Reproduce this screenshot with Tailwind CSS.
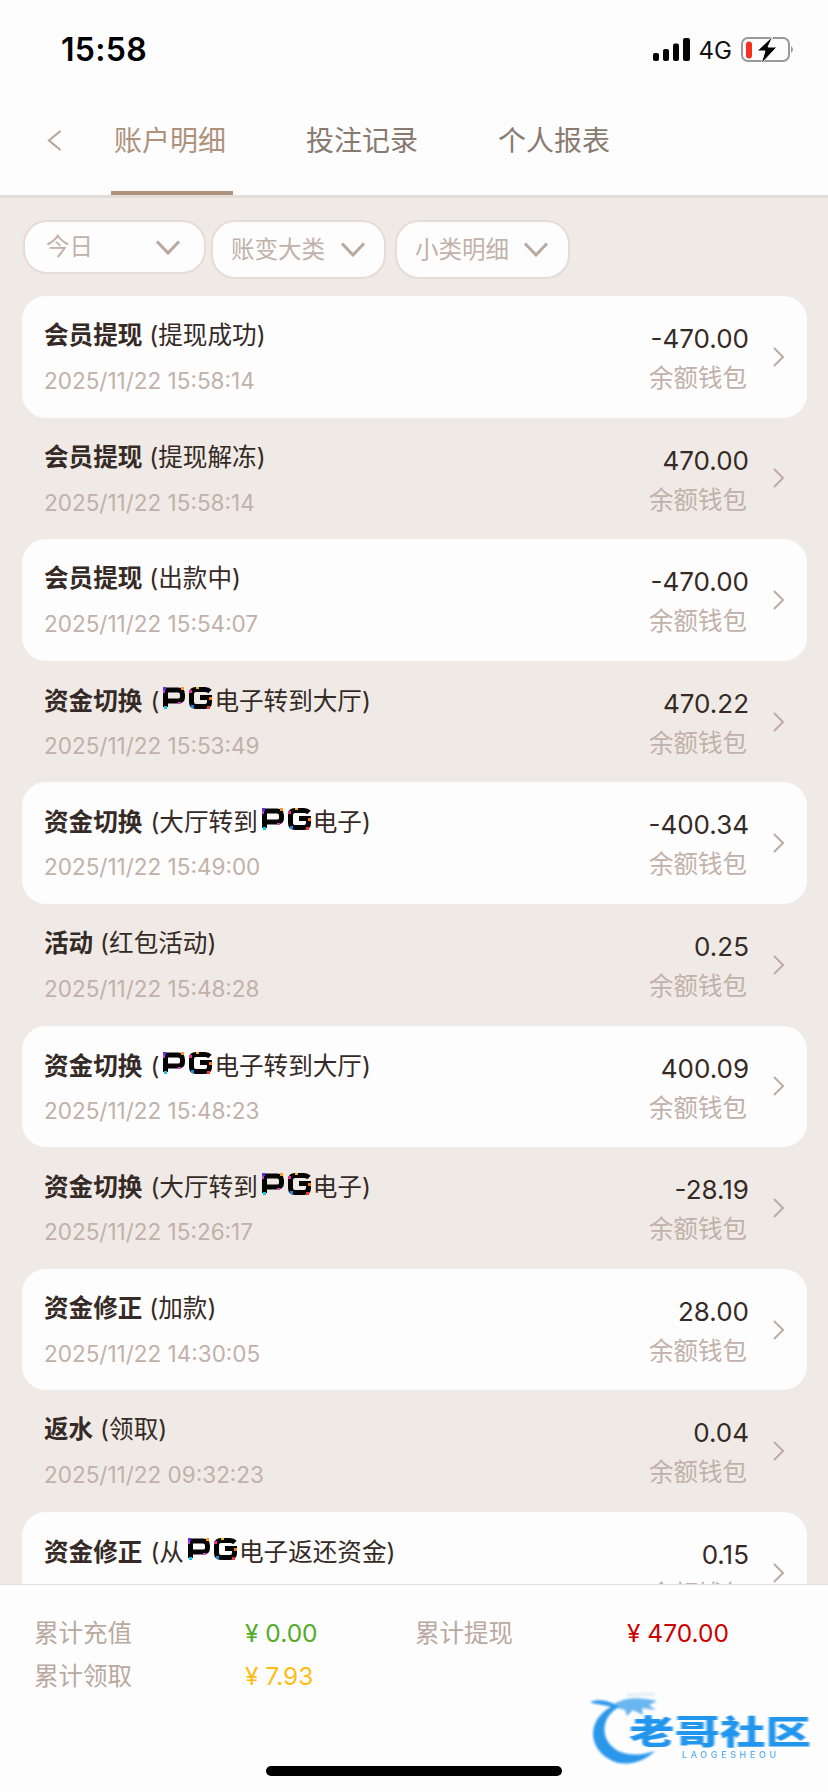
<!DOCTYPE html>
<html lang="zh-CN">
<head>
<meta charset="utf-8">
<script src="https://cdn.jsdelivr.net/npm/@tailwindcss/browser@4"></script>
</head>
<body class="m-0">
<svg width="0" height="0" class="absolute">
  <defs>
    <symbol id="pg" viewBox="0 0 49 22">
      <path d="M2.500 20V3H15Q19.500 3 19.500 7.500V10Q19.500 14 15 14H5" fill="none" stroke="#050505" stroke-width="5"/>
      <path d="M47 4.500Q45 2.500 42 2.500H33Q28.500 2.500 28.500 7V15Q28.500 19.500 33 19.500H42Q46.500 19.500 46.500 15V10.500H37" fill="none" stroke="#050505" stroke-width="5"/>
      <rect x="0" y="0" width="3" height="3" fill="#6a2be0"/>
      <rect x="0" y="3" width="2" height="3" fill="#c23be0"/>
      <rect x="1" y="19" width="3" height="3" fill="#19c6e8"/>
      <rect x="18" y="0" width="3" height="3" fill="#ff9a1a"/>
      <rect x="15" y="15" width="3" height="2" fill="#e83bd0"/>
      <rect x="26" y="3" width="3" height="3" fill="#ee2f8e"/>
      <rect x="33" y="0" width="3" height="2" fill="#ffb21a"/>
      <rect x="28" y="18" width="3" height="3" fill="#1e88e8"/>
      <rect x="46" y="10" width="3" height="3" fill="#ff7a1a"/>
      <rect x="44" y="19" width="3" height="3" fill="#f03a2a"/>
    </symbol>
    <symbol id="chev" viewBox="0 0 11 20">
      <path d="M1 1L10 10L1 19" fill="none" stroke="#bdaca3" stroke-width="2"/>
    </symbol>
    <symbol id="down" viewBox="0 0 25 15">
      <path d="M1.500 1.500L12.500 13L23.500 1.500" fill="none" stroke="#b8a89e" stroke-width="3"/>
    </symbol>
  </defs>
</svg>

<div class="relative w-[828px] h-[1792px] overflow-hidden flex flex-col bg-[#f0eae6] text-[#352a25]" style="font-family:Inter,'Noto Sans CJK SC',sans-serif">

  <!-- status bar -->
  <div class="h-[84px] bg-[#fdfdfe] flex items-start shrink-0 relative">
    <span class="ml-[61px] mt-[31px] text-[32px] leading-[38px] font-semibold text-black tracking-[0.3px]">15:58</span>
    <div class="ml-auto flex items-start">
      <svg class="mt-[38px]" width="38" height="23" viewBox="0 0 38 23" fill="#050505">
        <rect x="0" y="15" width="6" height="8" rx="2"/>
        <rect x="10" y="11" width="6" height="12" rx="2"/>
        <rect x="20" y="5.500" width="6" height="17.500" rx="2"/>
        <rect x="30" y="0" width="7" height="23" rx="2"/>
      </svg>
      <span class="ml-[8px] mt-[36px] text-[24px] leading-[29px] text-[#111]">4G</span>
      <svg class="ml-[9px] mt-[36px] mr-[33px]" width="54" height="28" viewBox="0 0 54 28">
        <rect x="1" y="2" width="47" height="23" rx="6" fill="none" stroke="#999" stroke-width="2"/>
        <path d="M50 10Q54 13.500 50 17Z" fill="#999"/>
        <rect x="5" y="5.500" width="6" height="17" rx="3" fill="#f5301f"/>
        <path d="M32 0L16 15H24L20 28L36 11H27Z" fill="#050505" stroke="#fdfdfe" stroke-width="1"/>
      </svg>
    </div>
  </div>

  <!-- tabs -->
  <div class="relative h-[111px] shrink-0 bg-[#fdfdfe] flex items-start pt-[37px]">
    <svg class="ml-[47px] mt-[9px]" width="15" height="21" viewBox="0 0 15 21">
      <path d="M13.500 1L2 10.500L13.500 20" fill="none" stroke="#b9a69a" stroke-width="2.200"/>
    </svg>
    <span class="ml-[52px] w-[112px] text-[28px] leading-[40px] text-[#ae927b]">账户明细</span>
    <span class="ml-[80px] w-[112px] text-[28px] leading-[40px] text-[#897a70]">投注记录</span>
    <span class="ml-[80px] w-[112px] text-[28px] leading-[40px] text-[#897a70]">个人报表</span>
    <div class="absolute left-[111px] bottom-0 w-[122px] h-[4px] bg-[#ae927b]"></div>
  </div>
  <div class="h-[3px] shrink-0 bg-[#e3dcd6]"></div>

  <!-- filters -->
  <div class="h-[98px] shrink-0 flex items-start pt-[22px] text-[23.5px] text-[#c1b1a8]">
    <div class="ml-[23px] w-[183px] h-[54px] rounded-[24px] border-2 border-[#e5dcd7] bg-[#fdfdfe] flex items-center">
      <span class="ml-[21px] leading-[30px]">今日</span>
      <svg class="ml-auto mr-[23px]" width="26" height="15"><use href="#down"/></svg>
    </div>
    <div class="ml-[5px] w-[175px] h-[59px] rounded-[24px] border-2 border-[#e5dcd7] bg-[#fdfdfe] flex items-center">
      <span class="ml-[18px] leading-[30px]">账变大类</span>
      <svg class="ml-auto mr-[18px]" width="26" height="15"><use href="#down"/></svg>
    </div>
    <div class="ml-[9px] w-[175px] h-[59px] rounded-[24px] border-2 border-[#e5dcd7] bg-[#fdfdfe] flex items-center">
      <span class="ml-[18px] leading-[30px]">小类明细</span>
      <svg class="ml-auto mr-[19px]" width="26" height="15"><use href="#down"/></svg>
    </div>
  </div>

  <!-- list -->
  <div class="flex-1 min-h-0 overflow-hidden pl-[22px] pr-[21px]">

    <div class="h-[121.6px] rounded-[24px] bg-[#fdfdfe] flex">
      <div class="flex-1 pl-[22px] pt-[23px]">
        <div class="h-8 text-[24.6px] leading-8 whitespace-nowrap"><span class="font-semibold">会员提现</span> (提现成功)</div>
        <div class="mt-[14px] h-8 text-[22.5px] leading-8 text-[#c1b1a8]">2025/11/22 15:58:14</div>
      </div>
      <div class="flex flex-col items-end pt-[27px]">
        <div class="h-8 text-[26px] leading-8">-470.00</div>
        <div class="mt-[7px] mr-[2px] h-8 text-[24.5px] leading-8 text-[#c1b1a8]">余额钱包</div>
      </div>
      <svg class="self-center ml-[24px] mr-[23px]" width="11" height="20"><use href="#chev"/></svg>
    </div>

    <div class="h-[121.6px] flex">
      <div class="flex-1 pl-[22px] pt-[23px]">
        <div class="h-8 text-[24.6px] leading-8 whitespace-nowrap"><span class="font-semibold">会员提现</span> (提现解冻)</div>
        <div class="mt-[14px] h-8 text-[22.5px] leading-8 text-[#c1b1a8]">2025/11/22 15:58:14</div>
      </div>
      <div class="flex flex-col items-end pt-[27px]">
        <div class="h-8 text-[26px] leading-8">470.00</div>
        <div class="mt-[7px] mr-[2px] h-8 text-[24.5px] leading-8 text-[#c1b1a8]">余额钱包</div>
      </div>
      <svg class="self-center ml-[24px] mr-[23px]" width="11" height="20"><use href="#chev"/></svg>
    </div>

    <div class="h-[121.6px] rounded-[24px] bg-[#fdfdfe] flex">
      <div class="flex-1 pl-[22px] pt-[23px]">
        <div class="h-8 text-[24.6px] leading-8 whitespace-nowrap"><span class="font-semibold">会员提现</span> (出款中)</div>
        <div class="mt-[14px] h-8 text-[22.5px] leading-8 text-[#c1b1a8]">2025/11/22 15:54:07</div>
      </div>
      <div class="flex flex-col items-end pt-[27px]">
        <div class="h-8 text-[26px] leading-8">-470.00</div>
        <div class="mt-[7px] mr-[2px] h-8 text-[24.5px] leading-8 text-[#c1b1a8]">余额钱包</div>
      </div>
      <svg class="self-center ml-[24px] mr-[23px]" width="11" height="20"><use href="#chev"/></svg>
    </div>

    <div class="h-[121.6px] flex">
      <div class="flex-1 pl-[22px] pt-[24px]">
        <div class="h-8 text-[24.6px] leading-8 whitespace-nowrap flex items-center"><span class="font-semibold">资金切换</span><span class="ml-[8px]">(</span><svg class="ml-[4px] mr-[2px] -mt-[6px]" width="49" height="22"><use href="#pg"/></svg><span>电子转到大厅)</span></div>
        <div class="mt-[13px] h-8 text-[22.5px] leading-8 text-[#c1b1a8]">2025/11/22 15:53:49</div>
      </div>
      <div class="flex flex-col items-end pt-[27px]">
        <div class="h-8 text-[26px] leading-8">470.22</div>
        <div class="mt-[7px] mr-[2px] h-8 text-[24.5px] leading-8 text-[#c1b1a8]">余额钱包</div>
      </div>
      <svg class="self-center ml-[24px] mr-[23px]" width="11" height="20"><use href="#chev"/></svg>
    </div>

    <div class="h-[121.6px] rounded-[24px] bg-[#fdfdfe] flex">
      <div class="flex-1 pl-[22px] pt-[24px]">
        <div class="h-8 text-[24.6px] leading-8 whitespace-nowrap flex items-center"><span class="font-semibold">资金切换</span><span class="ml-[8px]">(大厅转到</span><svg class="ml-[4px] mr-[2px] -mt-[6px]" width="49" height="22"><use href="#pg"/></svg><span>电子)</span></div>
        <div class="mt-[13px] h-8 text-[22.5px] leading-8 text-[#c1b1a8]">2025/11/22 15:49:00</div>
      </div>
      <div class="flex flex-col items-end pt-[27px]">
        <div class="h-8 text-[26px] leading-8">-400.34</div>
        <div class="mt-[7px] mr-[2px] h-8 text-[24.5px] leading-8 text-[#c1b1a8]">余额钱包</div>
      </div>
      <svg class="self-center ml-[24px] mr-[23px]" width="11" height="20"><use href="#chev"/></svg>
    </div>

    <div class="h-[121.6px] flex">
      <div class="flex-1 pl-[22px] pt-[23px]">
        <div class="h-8 text-[24.6px] leading-8 whitespace-nowrap"><span class="font-semibold">活动</span> (红包活动)</div>
        <div class="mt-[14px] h-8 text-[22.5px] leading-8 text-[#c1b1a8]">2025/11/22 15:48:28</div>
      </div>
      <div class="flex flex-col items-end pt-[27px]">
        <div class="h-8 text-[26px] leading-8">0.25</div>
        <div class="mt-[7px] mr-[2px] h-8 text-[24.5px] leading-8 text-[#c1b1a8]">余额钱包</div>
      </div>
      <svg class="self-center ml-[24px] mr-[23px]" width="11" height="20"><use href="#chev"/></svg>
    </div>

    <div class="h-[121.6px] rounded-[24px] bg-[#fdfdfe] flex">
      <div class="flex-1 pl-[22px] pt-[24px]">
        <div class="h-8 text-[24.6px] leading-8 whitespace-nowrap flex items-center"><span class="font-semibold">资金切换</span><span class="ml-[8px]">(</span><svg class="ml-[4px] mr-[2px] -mt-[6px]" width="49" height="22"><use href="#pg"/></svg><span>电子转到大厅)</span></div>
        <div class="mt-[13px] h-8 text-[22.5px] leading-8 text-[#c1b1a8]">2025/11/22 15:48:23</div>
      </div>
      <div class="flex flex-col items-end pt-[27px]">
        <div class="h-8 text-[26px] leading-8">400.09</div>
        <div class="mt-[7px] mr-[2px] h-8 text-[24.5px] leading-8 text-[#c1b1a8]">余额钱包</div>
      </div>
      <svg class="self-center ml-[24px] mr-[23px]" width="11" height="20"><use href="#chev"/></svg>
    </div>

    <div class="h-[121.6px] flex">
      <div class="flex-1 pl-[22px] pt-[24px]">
        <div class="h-8 text-[24.6px] leading-8 whitespace-nowrap flex items-center"><span class="font-semibold">资金切换</span><span class="ml-[8px]">(大厅转到</span><svg class="ml-[4px] mr-[2px] -mt-[6px]" width="49" height="22"><use href="#pg"/></svg><span>电子)</span></div>
        <div class="mt-[13px] h-8 text-[22.5px] leading-8 text-[#c1b1a8]">2025/11/22 15:26:17</div>
      </div>
      <div class="flex flex-col items-end pt-[27px]">
        <div class="h-8 text-[26px] leading-8">-28.19</div>
        <div class="mt-[7px] mr-[2px] h-8 text-[24.5px] leading-8 text-[#c1b1a8]">余额钱包</div>
      </div>
      <svg class="self-center ml-[24px] mr-[23px]" width="11" height="20"><use href="#chev"/></svg>
    </div>

    <div class="h-[121.6px] rounded-[24px] bg-[#fdfdfe] flex">
      <div class="flex-1 pl-[22px] pt-[23px]">
        <div class="h-8 text-[24.6px] leading-8 whitespace-nowrap"><span class="font-semibold">资金修正</span> (加款)</div>
        <div class="mt-[14px] h-8 text-[22.5px] leading-8 text-[#c1b1a8]">2025/11/22 14:30:05</div>
      </div>
      <div class="flex flex-col items-end pt-[27px]">
        <div class="h-8 text-[26px] leading-8">28.00</div>
        <div class="mt-[7px] mr-[2px] h-8 text-[24.5px] leading-8 text-[#c1b1a8]">余额钱包</div>
      </div>
      <svg class="self-center ml-[24px] mr-[23px]" width="11" height="20"><use href="#chev"/></svg>
    </div>

    <div class="h-[121.6px] flex">
      <div class="flex-1 pl-[22px] pt-[23px]">
        <div class="h-8 text-[24.6px] leading-8 whitespace-nowrap"><span class="font-semibold">返水</span> (领取)</div>
        <div class="mt-[14px] h-8 text-[22.5px] leading-8 text-[#c1b1a8]">2025/11/22 09:32:23</div>
      </div>
      <div class="flex flex-col items-end pt-[27px]">
        <div class="h-8 text-[26px] leading-8">0.04</div>
        <div class="mt-[7px] mr-[2px] h-8 text-[24.5px] leading-8 text-[#c1b1a8]">余额钱包</div>
      </div>
      <svg class="self-center ml-[24px] mr-[23px]" width="11" height="20"><use href="#chev"/></svg>
    </div>

    <div class="h-[121.6px] rounded-[24px] bg-[#fdfdfe] flex">
      <div class="flex-1 pl-[22px] pt-[24px]">
        <div class="h-8 text-[24.6px] leading-8 whitespace-nowrap flex items-center"><span class="font-semibold">资金修正</span><span class="ml-[8px]">(从</span><svg class="ml-[4px] mr-[2px] -mt-[6px]" width="49" height="22"><use href="#pg"/></svg><span>电子返还资金)</span></div>
      </div>
      <div class="flex flex-col items-end pt-[27px]">
        <div class="h-8 text-[26px] leading-8">0.15</div>
        <div class="mt-[7px] mr-[2px] h-8 text-[24.5px] leading-8 text-[#c1b1a8]">余额钱包</div>
      </div>
      <svg class="self-center ml-[24px] mr-[23px]" width="11" height="20"><use href="#chev"/></svg>
    </div>
  </div>

  <!-- footer totals -->
  <div class="h-[208px] shrink-0 bg-[#fdfdfe] border-t border-[#e3dcd6] pl-[34px] pt-[28px] text-[24.5px] leading-[40px]">
    <div class="grid grid-cols-[211px_170px_212px_1fr] gap-y-[3px]">
      <span class="text-[#b9a99f]">累计充值</span>
      <span class="text-[#52ac24]">¥ 0.00</span>
      <span class="text-[#b9a99f]">累计提现</span>
      <span class="text-[#cc0000]">¥ 470.00</span>
      <span class="text-[#b9a99f]">累计领取</span>
      <span class="text-[#fdbd14]">¥ 7.93</span>
    </div>
  </div>

  <!-- home indicator -->
  <div class="absolute left-[266px] top-[1766px] w-[296px] h-[10px] rounded-full bg-black"></div>

  <!-- watermark -->
  <div class="absolute left-[585px] top-[1690px] w-[235px] h-[80px]">
    <svg class="absolute left-0 top-0 blur-[0.8px]" width="110" height="80" viewBox="0 0 110 80">
      <path d="M5 12C16 8 27 12 34 17C21 24 16 38 22 50C29 63 46 69 70 61C58 73 37 78 24 69C3 57 2 30 26 17C18 14 11 15 5 12Z" fill="#2a97ea"/>
      <path d="M28 15C40 7 54 7 72 11L64 15L71 20L57 18L58 25L48 20L42 26L40 20L32 18Z" fill="#2a97ea" fill-opacity="0.7"/>
      <path d="M42 5L70 4" stroke="#d5e8f8" stroke-width="2" fill="none"/>
    </svg>
    <div class="absolute left-[44px] top-[23px] w-[128.6px] text-[33px] leading-[38px] font-black text-[#2295ec] whitespace-nowrap origin-top-left scale-x-[1.38] blur-[0.7px]">老哥社区</div>
    <div class="absolute left-[97px] top-[60px] w-[110px] text-[9px] leading-[10px] tracking-[3.6px] font-medium text-[#58aeee] whitespace-nowrap blur-[0.3px]">LAOGESHEOU</div>
  </div>
</div>
</body>
</html>
